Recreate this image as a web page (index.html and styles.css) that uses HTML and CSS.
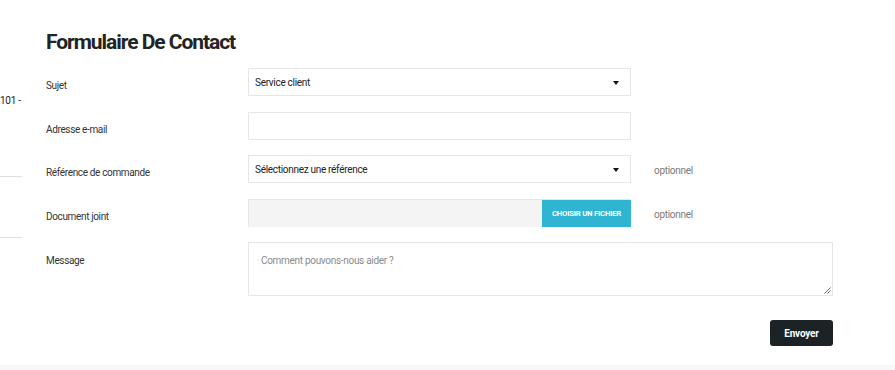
FILE: index.html
```html
<!DOCTYPE html>
<html lang="fr">
<head>
<meta charset="utf-8">
<title>Formulaire De Contact</title>
<link rel="stylesheet" href="styles.css">
</head>
<body>
<div class="page">
  <aside class="side">
    <p class="side-text">101 -</p>
    <hr class="side-line side-line-1">
    <hr class="side-line side-line-2">
  </aside>
  <main class="contact">
    <h1 class="title">Formulaire De Contact</h1>
    <form class="form">
      <div class="row">
        <label class="label">Sujet</label>
        <div class="field select">
          <span class="select-text">Service client</span>
          <span class="caret"></span>
        </div>
      </div>
      <div class="row row-b">
        <label class="label">Adresse e-mail</label>
        <div class="field"></div>
      </div>
      <div class="row row-a">
        <label class="label">Référence de commande</label>
        <div class="field select">
          <span class="select-text">Sélectionnez une référence</span>
          <span class="caret"></span>
        </div>
        <span class="optional">optionnel</span>
      </div>
      <div class="row row-b">
        <label class="label">Document joint</label>
        <div class="file">
          <div class="file-name"></div>
          <span class="file-btn">CHOISIR UN FICHIER</span>
        </div>
        <span class="optional">optionnel</span>
      </div>
      <div class="row row-a">
        <label class="label label-msg">Message</label>
        <div class="textarea">
          <span class="placeholder">Comment pouvons-nous aider ?</span>
          <svg class="grip" width="8" height="8" viewBox="0 0 8 8"><path d="M7.5 1.5L1.5 7.5M7.5 4.5L4.5 7.5" stroke="#555" stroke-width="0.9" fill="none"/></svg>
        </div>
      </div>
      <div class="actions">
        <button type="button" class="submit">Envoyer</button>
      </div>
    </form>
  </main>
</div>
<div class="footer-strip"></div>
</body>
</html>
```

FILE: styles.css
```css
* { box-sizing: border-box; }
html, body { margin: 0; padding: 0; background: #fff; }
body {
  font-family: Roboto, "Liberation Sans", sans-serif;
  color: #232323;
  width: 895px;
  height: 370px;
  overflow: hidden;
}
.page {
  display: flex;
  height: 365px;
}
.side {
  width: 46px;
  flex: none;
}
.side-text {
  margin: 0;
  padding-top: 95px;
  font-size: 10px;
  letter-spacing: -0.3px;
  color: #232323;
}
.side-line {
  margin: 0;
  border: 0;
  border-top: 1px solid #e1e1e1;
  width: 22px;
}
.side-line-1 { margin-top: 70px; }
.side-line-2 { margin-top: 60px; }
.contact {
  flex: 1;
  padding-top: 30px;
}
.title {
  margin: 0;
  font-size: 21px;
  line-height: 24px;
  font-weight: 700;
  letter-spacing: -1.05px;
  color: #232323;
}
.form {
  margin-top: 14px;
  display: flex;
  flex-direction: column;
}
.row {
  display: flex;
  align-items: flex-start;
}
.row-a { margin-top: 15px; }
.row-b { margin-top: 16px; }
.label {
  width: 202px;
  flex: none;
  padding-top: 12px;
  font-size: 10px;
  line-height: 12px;
  letter-spacing: -0.35px;
  color: #333;
}
.label-msg { padding-top: 13px; }
.field {
  width: 383px;
  height: 28px;
  border: 1px solid #e6e6e6;
  background: #fff;
  flex: none;
}
.select {
  display: flex;
  align-items: center;
  justify-content: space-between;
  padding: 1px 11px 0 6px;
}
.select-text {
  font-size: 10px;
  letter-spacing: -0.3px;
  color: #232323;
}
.caret {
  width: 0;
  height: 0;
  border-left: 3.5px solid transparent;
  border-right: 3.5px solid transparent;
  border-top: 4px solid #111;
}
.optional {
  margin-left: 23px;
  padding-top: 10px;
  font-size: 10px;
  letter-spacing: -0.3px;
  color: #7a7a7a;
}
.file {
  width: 383px;
  height: 28px;
  display: flex;
  flex: none;
  border-top: 1px solid #e6e6e6;
}
.file-name {
  flex: 1;
  background: #f4f4f4;
  border-left: 1px solid #e6e6e6;
}
.file-btn {
  width: 89px;
  background: #2fb5d2;
  color: #fff;
  font-size: 7.8px;
  font-weight: 700;
  letter-spacing: -0.25px;
  display: flex;
  align-items: center;
  justify-content: center;
}
.textarea {
  width: 585px;
  height: 54px;
  border: 1px solid #e6e6e6;
  padding: 6px 12px;
  position: relative;
}
.placeholder {
  font-size: 10px;
  letter-spacing: -0.3px;
  color: #8c8c8c;
}
.grip {
  position: absolute;
  right: 1px;
  bottom: 1px;
}
.actions {
  display: flex;
  justify-content: flex-end;
  width: 787px;
  margin-top: 24px;
}
.submit {
  width: 63px;
  height: 26px;
  border: 0;
  border-radius: 3px;
  background: #1b2326;
  color: #fff;
  font-family: Roboto, "Liberation Sans", sans-serif;
  font-size: 10px;
  font-weight: 700;
  letter-spacing: -0.2px;
  padding: 0;
}
.footer-strip {
  height: 5px;
  background: #f8f8f8;
}
```
